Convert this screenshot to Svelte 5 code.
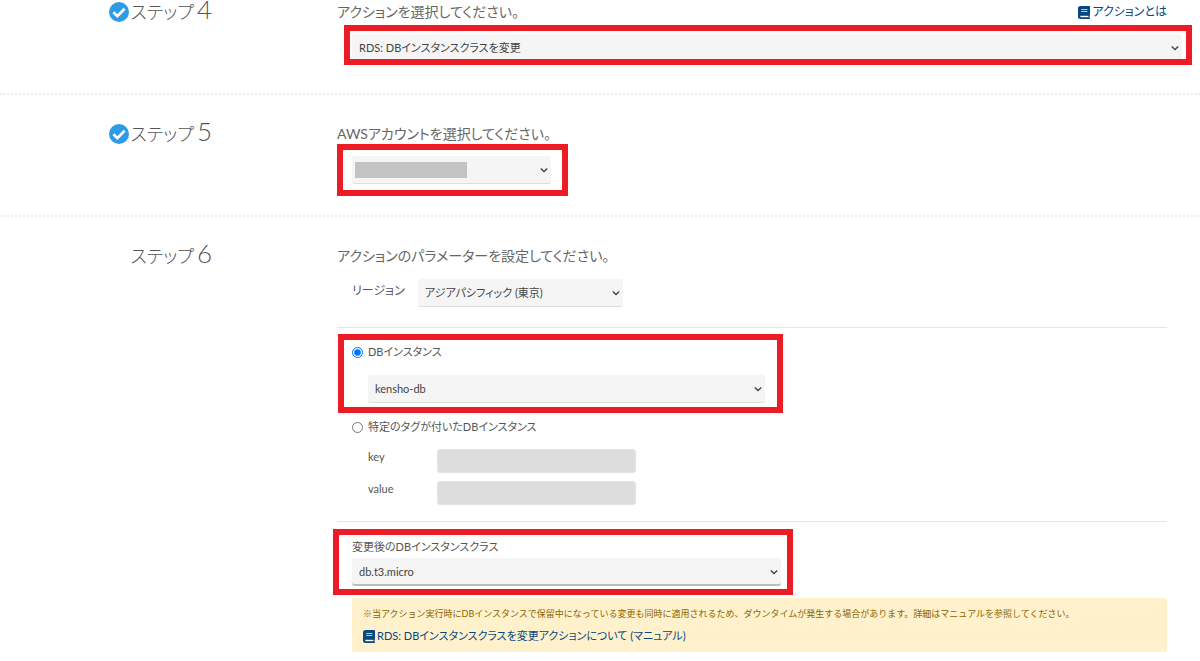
<script lang="ts">
	let action = $state("rds-class");
	let account = $state("");
	let region = $state("tokyo");
	let target = $state("instance");
	let instance = $state("kensho-db");
	let tagKey = $state("");
	let tagValue = $state("");
	let instanceClass = $state("db.t3.micro");
</script>

{#snippet check()}
	<svg class="check" viewBox="0 0 20 20" aria-hidden="true">
		<circle cx="10" cy="10" r="10" fill="#2e9be6" />
		<path d="M4.4 10.2l4 4 7.2-7.4" fill="none" stroke="#fff" stroke-width="2.7" />
	</svg>
{/snippet}

{#snippet book()}
	<svg class="book" viewBox="0 0 12 13" aria-hidden="true">
		<path d="M2.5 0H11.3Q12 0 12 .7V9.2Q12 9.6 11.6 9.9V11.9Q12 12.1 12 12.4 12 13 11.4 13H2.5Q0 13 0 10.5V2.5Q0 0 2.5 0Z" fill="#07487f" />
		<path d="M3.2 3.5H9.4M3.2 5.5H9.4" stroke="#b4cbdd" stroke-width="1" />
		<path d="M2.4 10.5H10.4" stroke="#fff" stroke-width="1.4" />
	</svg>
{/snippet}

{#snippet chevron()}
	<svg class="chevron" viewBox="0 0 10 10" aria-hidden="true">
		<path d="M1.8 3.5L5 6.6 8.2 3.5" fill="none" stroke="#444" stroke-width="1.4" />
	</svg>
{/snippet}

<main>
	<section class="step">
		<h2>{@render check()}ステップ<b>4</b></h2>
		<div class="content">
			<div class="lead">
				<label for="action">アクションを選択してください。</label>
				<a href="#action">{@render book()}アクションとは</a>
			</div>
			<div class="select wide">
				<select id="action" bind:value={action}>
					<option value="rds-class">RDS: DBインスタンスクラスを変更</option>
				</select>
				{@render chevron()}
				<span class="mark mark-action"></span>
			</div>
		</div>
	</section>

	<section class="step">
		<h2>{@render check()}ステップ<b>5</b></h2>
		<div class="content">
			<div class="lead">
				<label for="account">AWSアカウントを選択してください。</label>
			</div>
			<div class="select account">
				<select id="account" bind:value={account}>
					<option value=""></option>
				</select>
				{@render chevron()}
				<span class="redacted"></span>
				<span class="mark mark-account"></span>
			</div>
		</div>
	</section>

	<section class="step">
		<h2>ステップ<b>6</b></h2>
		<div class="content">
			<div class="lead"><span>アクションのパラメーターを設定してください。</span></div>

			<div class="region">
				<label for="region">リージョン</label>
				<div class="select">
					<select id="region" bind:value={region}>
						<option value="tokyo">アジアパシフィック (東京)</option>
					</select>
					{@render chevron()}
				</div>
			</div>

			<div class="group">
				<div class="target">
					<label class="radio">
						<input type="radio" name="target" value="instance" bind:group={target} />
						DBインスタンス
					</label>
					<div class="select">
						<select aria-label="DBインスタンス" bind:value={instance}>
							<option value="kensho-db">kensho-db</option>
						</select>
						{@render chevron()}
					</div>
					<span class="mark mark-target"></span>
				</div>
				<label class="radio">
					<input type="radio" name="target" value="tag" bind:group={target} />
					特定のタグが付いたDBインスタンス
				</label>
				<div class="tags">
					<label for="tag-key">key</label>
					<input id="tag-key" type="text" bind:value={tagKey} disabled={target !== "tag"} />
					<label for="tag-value">value</label>
					<input id="tag-value" type="text" bind:value={tagValue} disabled={target !== "tag"} />
				</div>
			</div>

			<div class="group last">
				<div class="class">
					<label for="class">変更後のDBインスタンスクラス</label>
					<div class="select active">
						<select id="class" bind:value={instanceClass}>
							<option value="db.t3.micro">db.t3.micro</option>
						</select>
						{@render chevron()}
					</div>
					<span class="mark mark-class"></span>
				</div>
				<div class="notice">
					<p>※当アクション実行時にDBインスタンスで保留中になっている変更も同時に適用されるため、ダウンタイムが発生する場合があります。詳細はマニュアルを参照してください。</p>
					<a href="#manual">{@render book()}RDS: DBインスタンスクラスを変更アクションについて (マニュアル)</a>
				</div>
			</div>
		</div>
	</section>
</main>

<style>
:global(body) {
	margin: 0;
	background: #fff;
}
main {
	font-family: Lato, "Noto Sans CJK JP", sans-serif;
	font-size: 11px;
	line-height: 16px;
	font-feature-settings: "palt";
	color: #555;
}
.step {
	display: grid;
	grid-template-columns: 212px minmax(0, 1fr);
	column-gap: 125px;
	padding: 27px 33px 31px 0;
	border-bottom: 2px dotted #eee;
}
.step:first-child {
	padding-top: 0;
}
.step:last-child {
	border-bottom: none;
	padding-bottom: 8px;
}
h2 {
	display: flex;
	justify-content: flex-end;
	align-items: center;
	height: 24px;
	margin: 0;
	font-size: 18px;
	font-weight: 300;
	color: #555;
}
h2 b {
	margin-left: 3px;
	padding-bottom: 6px;
	font-size: 26px;
	line-height: 20px;
	font-weight: 300;
}
.check {
	width: 20px;
	height: 20px;
	margin-right: 2px;
}
.lead {
	display: flex;
	justify-content: space-between;
	align-items: center;
	height: 24px;
	margin-bottom: 10px;
	font-size: 14px;
	color: #666;
}
a {
	display: flex;
	align-items: center;
	gap: 2px;
	color: #07487f;
	text-decoration: none;
}
.lead a {
	font-size: 12px;
}
.book {
	width: 12px;
	height: 13px;
}
.select {
	position: relative;
}
select {
	display: block;
	width: 100%;
	height: 28px;
	padding: 0 20px 0 7px;
	border: none;
	border-bottom: 1px solid #ddd;
	border-radius: 3px;
	background: #f5f5f5;
	font-family: inherit;
	font-size: 11px;
	font-feature-settings: inherit;
	color: #444;
	appearance: none;
}
.active select {
	border-bottom: 2px solid #bbb;
}
.chevron {
	position: absolute;
	right: 2px;
	top: 9px;
	width: 10px;
	height: 10px;
	pointer-events: none;
}
.wide {
	margin: 0 -15px 0 15px;
}
.account {
	width: 199px;
	margin-left: 15px;
}
.redacted {
	position: absolute;
	left: 3px;
	top: 6px;
	width: 112px;
	height: 16px;
	background: #c3c3c3;
}
/* red frames that point out the fields to fill in */
.mark {
	position: absolute;
	border: 6px solid #ed1c24;
	pointer-events: none;
}
.mark-action {
	inset: -9px -10px -3px -8px;
}
.mark-account {
	inset: -12px -17px -12px -15px;
}
.mark-target {
	inset: -8px -18px -10px -14px;
}
.mark-class {
	inset: -10px -12px -9px -19px;
}
.region {
	display: flex;
	gap: 14px;
	padding: 1px 0 20px 15px;
}
.region label {
	width: 52px;
	padding-top: 4px;
	font-size: 12px;
	white-space: nowrap;
}
.region .select {
	width: 205px;
}
.group {
	padding: 14px 0 16px 15px;
	border-top: 1px solid #e5e5e5;
}
.group.last {
	padding: 17px 0 0 15px;
}
.target {
	position: relative;
	width: 413px;
	margin-bottom: 16px;
}
.target .select {
	margin: 15px 0 0 16px;
}
.target .radio {
	padding-top: 2px;
}
.radio {
	display: flex;
	align-items: center;
	gap: 5px;
}
.radio input {
	width: 11px;
	height: 11px;
	margin: 0;
}
.tags {
	display: grid;
	grid-template-columns: 61px 199px;
	gap: 8px;
	margin: 14px 0 0 16px;
}
.tags input {
	box-sizing: border-box;
	width: 100%;
	height: 24px;
	border: 1px solid #e4e4e4;
	border-radius: 3px;
	background: #ddd;
}
.class {
	position: relative;
	width: 429px;
}
.class .select {
	margin-top: 3px;
}
.notice {
	margin-top: 12px;
	padding: 8px 11px;
	border-radius: 2px;
	background: #fff1cc;
}
.notice p {
	margin: 0 0 6px;
	font-size: 9px;
	font-feature-settings: normal;
	color: #8a6500;
}
</style>
